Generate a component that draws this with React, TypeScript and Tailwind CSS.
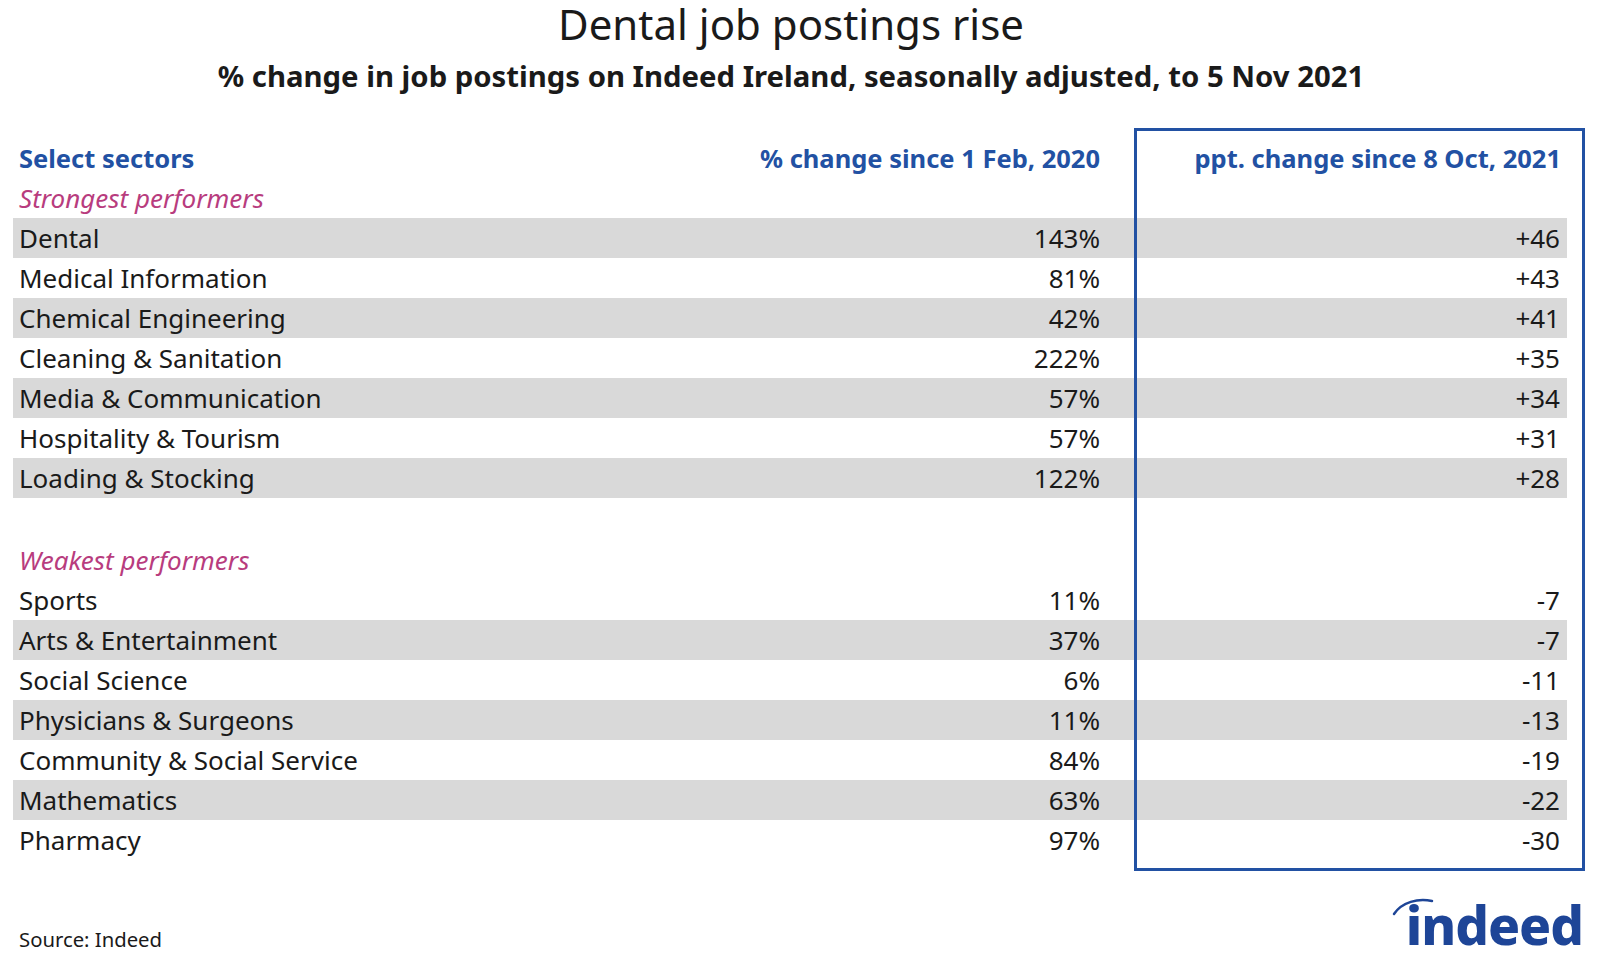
import React from "react"

type Row = { name: string; since2020: string; sinceOct: string }

const strongest: Row[] = [
  { name: "Dental", since2020: "143%", sinceOct: "+46" },
  { name: "Medical Information", since2020: "81%", sinceOct: "+43" },
  { name: "Chemical Engineering", since2020: "42%", sinceOct: "+41" },
  { name: "Cleaning & Sanitation", since2020: "222%", sinceOct: "+35" },
  { name: "Media & Communication", since2020: "57%", sinceOct: "+34" },
  { name: "Hospitality & Tourism", since2020: "57%", sinceOct: "+31" },
  { name: "Loading & Stocking", since2020: "122%", sinceOct: "+28" },
]

const weakest: Row[] = [
  { name: "Sports", since2020: "11%", sinceOct: "-7" },
  { name: "Arts & Entertainment", since2020: "37%", sinceOct: "-7" },
  { name: "Social Science", since2020: "6%", sinceOct: "-11" },
  { name: "Physicians & Surgeons", since2020: "11%", sinceOct: "-13" },
  { name: "Community & Social Service", since2020: "84%", sinceOct: "-19" },
  { name: "Mathematics", since2020: "63%", sinceOct: "-22" },
  { name: "Pharmacy", since2020: "97%", sinceOct: "-30" },
]

function DataRow({ row, shaded }: { row: Row; shaded: boolean }) {
  return (
    <div className={`flex h-[40px] items-center text-[26px] text-[#1a1a1a] ${shaded ? "bg-[#d9d9d9]" : ""}`}>
      <div className="flex-1 pl-[6px]">{row.name}</div>
      <div className="w-[300px] text-right">{row.since2020}</div>
      <div className="w-[467px] pr-[7px] text-right">{row.sinceOct}</div>
    </div>
  )
}

function SectionLabel({ children }: { children: React.ReactNode }) {
  return (
    <div className="flex h-[40px] items-center pl-[6px] text-[26px] italic text-[#b83c7e]">{children}</div>
  )
}

function IndeedLogo() {
  return (
    <div className="relative mr-[17px] mt-[38px] h-[53px]">
      <svg className="absolute left-[-14px] top-[-2px]" width="60" height="24" viewBox="0 0 60 24">
        <path d="M2 18 C 10 6, 26 2, 40 5" fill="none" stroke="#1e4597" strokeWidth="2.5" strokeLinecap="round" />
      </svg>
      <span className="block text-[53px] font-extrabold leading-none tracking-[-1px] text-[#1e4597]">indeed</span>
    </div>
  )
}

export default function App() {
  return (
    <div className="h-[961px] w-[1600px] bg-white" style={{ fontFamily: '"Noto Sans", "Open Sans", sans-serif' }}>
      <div className="h-[58px] pr-[18px] text-center text-[42px] leading-[48px] text-[#1a1a1a]">
        Dental job postings rise
      </div>
      <div className="flex h-[38px] items-center justify-center pr-[18px] text-[29.3px] font-bold leading-none text-[#1a1a1a]">
        % change in job postings on Indeed Ireland, seasonally adjusted, to 5 Nov 2021
      </div>

      <div className="relative ml-[13px] mt-[42px] w-[1554px]">
        <div className="pointer-events-none absolute left-[1121px] top-[-10px] z-10 h-[743px] w-[451px] border-[3px] border-[#2251a3]" />

        <div className="flex h-[40px] items-center text-[25.5px] font-bold text-[#2251a3]">
          <div className="flex-1 pl-[6px]">Select sectors</div>
          <div className="w-[500px] text-right">% change since 1 Feb, 2020</div>
          <div className="w-[467px] pr-[6px] text-right">ppt. change since 8 Oct, 2021</div>
        </div>

        <SectionLabel>Strongest performers</SectionLabel>
        {strongest.map((r, i) => (
          <DataRow key={r.name} row={r} shaded={i % 2 === 0} />
        ))}

        <div className="h-[42px]" />

        <SectionLabel>Weakest performers</SectionLabel>
        {weakest.map((r, i) => (
          <DataRow key={r.name} row={r} shaded={i % 2 === 1} />
        ))}
      </div>

      <div className="flex h-[101px] justify-between">
        <div className="mb-[8px] self-end pl-[19px] text-[20.3px] leading-[28px] text-[#1a1a1a]">Source: Indeed</div>
        <IndeedLogo />
      </div>
    </div>
  )
}
